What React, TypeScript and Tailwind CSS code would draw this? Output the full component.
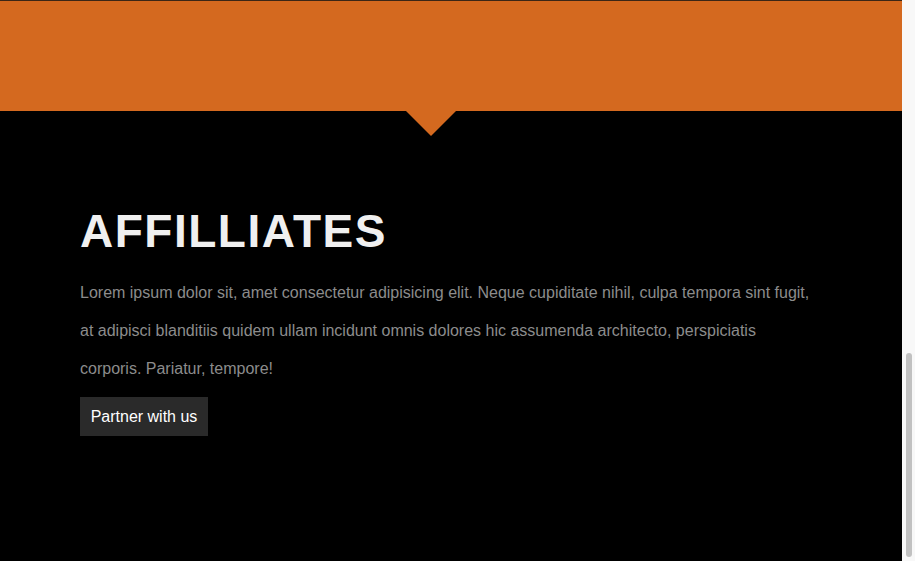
import React from "react";

export default function App() {
  return (
    <div className="flex h-[561px] w-[915px] overflow-hidden bg-black" style={{ fontFamily: '"Liberation Sans", Arial, sans-serif' }}>
      <div className="flex h-full w-[902px] flex-col">
        <div className="h-px bg-[#3b2616]" />
        <div className="relative h-[110px] bg-[#d4691f]">
          <div className="absolute left-[45%] top-full h-0 w-0 border-x-[25px] border-t-[25px] border-x-transparent border-t-[#d4691f]" />
        </div>
        <div className="px-20 pt-[93px]">
          <h1 className="text-[46px] font-bold leading-[55px] tracking-[1.5px] text-[#f0f0f0]">AFFILLIATES</h1>
          <p className="mt-[15px] w-[735px] text-base leading-[38px] text-[#8c8c8c]">
            Lorem ipsum dolor sit, amet consectetur adipisicing elit. Neque cupiditate nihil, culpa tempora sint fugit, at adipisci blanditiis quidem ullam incidunt omnis dolores hic assumenda architecto, perspiciatis corporis. Pariatur, tempore!
          </p>
          <button className="mt-[9px] h-[39px] w-[128px] bg-[#2a2a2a] text-base text-white">Partner with us</button>
        </div>
      </div>
      <div className="flex h-full w-[13px] flex-col bg-[#f8f8f8] pl-[4px] pr-[3px] pt-[353px] pb-[4px]">
        <div className="flex-1 rounded-full bg-[#c1c1c1]" />
      </div>
    </div>
  );
}
